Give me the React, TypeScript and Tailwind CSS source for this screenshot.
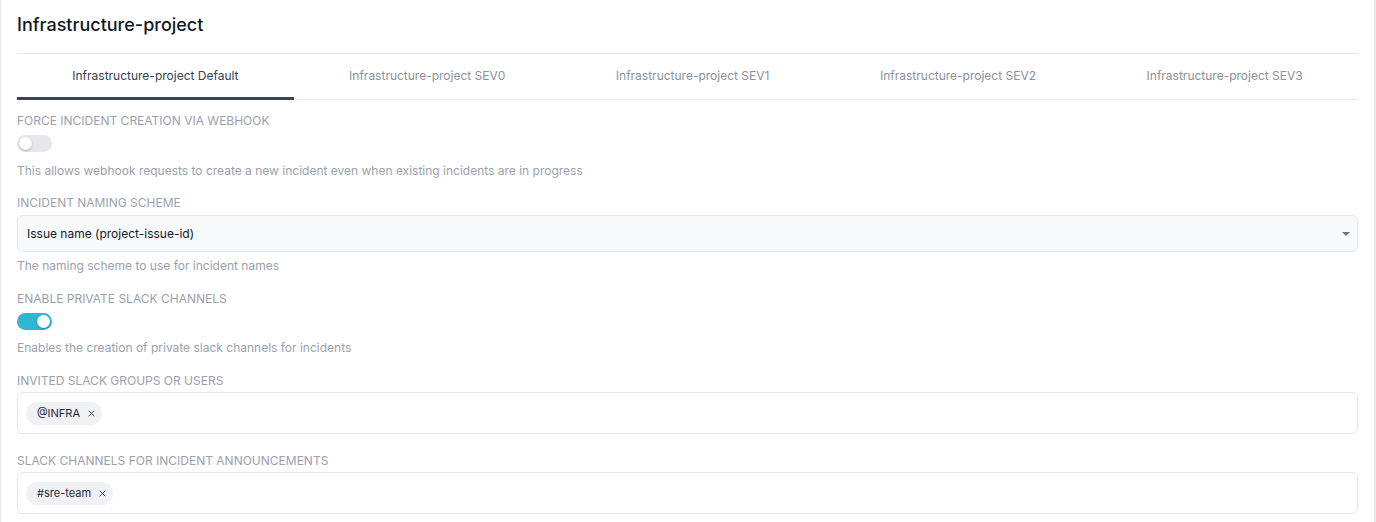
import { useState } from "react";

const TABS = [
  "Infrastructure-project Default",
  "Infrastructure-project SEV0",
  "Infrastructure-project SEV1",
  "Infrastructure-project SEV2",
  "Infrastructure-project SEV3",
];

function Toggle({ on }: { on: boolean }) {
  return (
    <button
      className={`relative flex items-center w-[35px] h-[17px] rounded-full px-[2px] ${
        on ? "bg-[#31b6d2] justify-end" : "bg-[#e5e7eb] justify-start"
      }`}
      aria-pressed={on}
    >
      <span className="block h-[13px] w-[13px] rounded-full bg-white shadow-[0_1px_2px_rgba(0,0,0,0.25)]" />
    </button>
  );
}

function Chip({ label }: { label: string }) {
  return (
    <span className="inline-flex items-center h-[23px] rounded-full bg-[#f0f1f4] pl-[11px] pr-[7px] text-[11px] text-[#1f2937]">
      {label}
      <svg viewBox="0 0 10 10" className="ml-[8px] w-[7px] h-[7px] text-[#374151]" fill="none" stroke="currentColor" strokeWidth="1.4">
        <path d="M1 1l8 8M9 1l-8 8" />
      </svg>
    </span>
  );
}

function Label({ children }: { children: React.ReactNode }) {
  return <div className="text-[12px] leading-[16px] uppercase text-[#9aa1ad]">{children}</div>;
}

function Help({ children }: { children: React.ReactNode }) {
  return <div className="text-[12px] leading-[16px] text-[#9aa1ad]">{children}</div>;
}

export default function App() {
  const [active, setActive] = useState(0);

  return (
    <div className="min-h-[522px] bg-white border-r-2 border-l border-[#e8e8ea] pl-[16px] pr-[16px] font-['Inter',sans-serif]">
      {/* Header */}
      <div className="pt-[11px] pb-[14px] border-b border-[#e5e7eb]">
        <h1 className="text-[18px] leading-[28px] font-medium text-[#111827]">Infrastructure-project</h1>
      </div>

      {/* Tabs */}
      <div className="flex border-b border-[#e5e7eb]">
        {TABS.map((tab, idx) => (
          <button
            key={tab}
            onClick={() => setActive(idx)}
            className={`flex-auto h-[46px] -mb-px flex items-center justify-center text-[12px] border-b-[3px] ${
              active === idx
                ? "border-[#3b4253] text-[#374151]"
                : "border-transparent text-[#8b919b]"
            }`}
          >
            {tab}
          </button>
        ))}
      </div>

      {/* Form */}
      <div className="flex flex-col">
        <div className="mt-[13px]">
          <Label>Force incident creation via webhook</Label>
        </div>
        <div className="mt-[6px]">
          <Toggle on={false} />
        </div>
        <div className="mt-[11px]">
          <Help>This allows webhook requests to create a new incident even when existing incidents are in progress</Help>
        </div>

        <div className="mt-[16px]">
          <Label>Incident naming scheme</Label>
        </div>
        <div className="mt-[4px] flex items-center justify-between h-[37px] rounded-md border border-[#e5e7eb] bg-[#f8f9fa] pl-[9px] pr-[7px]">
          <span className="text-[12px] text-[#111827]">Issue name (project-issue-id)</span>
          <svg viewBox="0 0 8 4" className="w-[8px] h-[4px] text-[#6b7280]" fill="currentColor">
            <path d="M0 0h8L4 4z" />
          </svg>
        </div>
        <div className="mt-[6px]">
          <Help>The naming scheme to use for incident names</Help>
        </div>

        <div className="mt-[17px]">
          <Label>Enable private slack channels</Label>
        </div>
        <div className="mt-[6px]">
          <Toggle on={true} />
        </div>
        <div className="mt-[10px]">
          <Help>Enables the creation of private slack channels for incidents</Help>
        </div>

        <div className="mt-[17px]">
          <Label>Invited slack groups or users</Label>
        </div>
        <div className="mt-[3px] flex items-center h-[42px] rounded-md border border-[#e5e7eb] bg-white px-[8px]">
          <Chip label="@INFRA" />
        </div>

        <div className="mt-[19px]">
          <Label>Slack channels for incident announcements</Label>
        </div>
        <div className="mt-[3px] flex items-center h-[42px] rounded-md border border-[#e5e7eb] bg-white px-[8px]">
          <Chip label="#sre-team" />
        </div>
      </div>
    </div>
  );
}
